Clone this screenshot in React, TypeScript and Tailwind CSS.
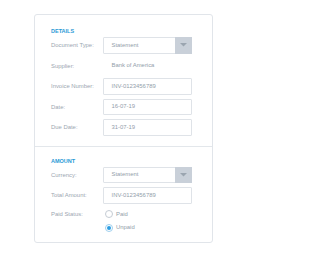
import React from "react";

const font = { fontFamily: '"Liberation Sans", Arial, sans-serif' };

function Label({ children }: { children: React.ReactNode }) {
  return <div className="w-[52px] shrink-0 text-[5.9px] leading-[8px] text-[#9ca6b1] whitespace-nowrap">{children}</div>;
}

function Input({ value }: { value: string }) {
  return (
    <div className="w-[89px] h-[16.5px] border border-[#dfe3e8] rounded-[1px] bg-white flex items-center pl-[7.5px] text-[5.9px] text-[#939eaa] whitespace-nowrap">
      {value}
    </div>
  );
}

function Select({ value }: { value: string }) {
  return (
    <div className="w-[89px] h-[16.5px] border border-[#dfe3e8] rounded-[1px] bg-white flex items-center text-[5.9px] text-[#939eaa]">
      <div className="flex-1 pl-[7.5px] whitespace-nowrap">{value}</div>
      <div className="w-[17px] h-[16.5px] -mr-px bg-[#c9d0d9] flex items-center justify-center">
        <svg width="7" height="4" viewBox="0 0 7 4">
          <path d="M0 0 H7 L3.5 3.5 Z" fill="#9ba5b0" />
        </svg>
      </div>
    </div>
  );
}

function Row({ label, children }: { label: string; children: React.ReactNode }) {
  return (
    <div className="flex items-center h-[16.5px]">
      <Label>{label}</Label>
      {children}
    </div>
  );
}

function Radio({ checked, label }: { checked?: boolean; label: string }) {
  return (
    <div className="flex items-center h-[13.5px] pl-[2px] gap-[3px]">
      <div
        className={
          checked
            ? "w-[8px] h-[8px] rounded-full border border-[#9fd0ef] bg-white flex items-center justify-center"
            : "w-[8px] h-[8px] rounded-full border border-[#c5ccd4] bg-white"
        }
      >
        {checked && <div className="w-[4.5px] h-[4.5px] rounded-full bg-[#2b9de2]" />}
      </div>
      <span className="text-[5.9px] text-[#939eaa]">{label}</span>
    </div>
  );
}

export default function App() {
  return (
    <div className="bg-white w-[247px] h-[270px] pt-[14px] pl-[34px]" style={font}>
      <div className="w-[179px] h-[229px] border border-[#e1e5ea] rounded-[3px] bg-white flex flex-col">
        <div className="pl-[16px] pt-[11.5px] pb-[10px] border-b border-[#e3e7eb]">
          <div className="text-[5.5px] leading-[8px] font-bold text-[#2a9ad6] mb-[2.5px]">DETAILS</div>
          <div className="flex flex-col gap-[4px]">
            <Row label="Document Type:">
              <Select value="Statement" />
            </Row>
            <Row label="Supplier:">
              <div className="pl-[8.5px] text-[5.9px] text-[#939eaa] whitespace-nowrap">Bank of America</div>
            </Row>
            <Row label="Invoice Number:">
              <Input value="INV-0123456789" />
            </Row>
            <Row label="Date:">
              <Input value="16-07-19" />
            </Row>
            <Row label="Due Date:">
              <Input value="31-07-19" />
            </Row>
          </div>
        </div>
        <div className="pl-[16px] pt-[10px]">
          <div className="text-[5.5px] leading-[8px] font-bold text-[#2a9ad6] mb-[2px]">AMOUNT</div>
          <div className="flex flex-col gap-[4px]">
            <Row label="Currency:">
              <Select value="Statement" />
            </Row>
            <Row label="Total Amount:">
              <Input value="INV-0123456789" />
            </Row>
            <div className="flex items-start">
              <div className="h-[13.5px] flex items-center">
                <Label>Paid Status:</Label>
              </div>
              <div className="flex flex-col">
                <Radio label="Paid" />
                <Radio checked label="Unpaid" />
              </div>
            </div>
          </div>
        </div>
      </div>
    </div>
  );
}
